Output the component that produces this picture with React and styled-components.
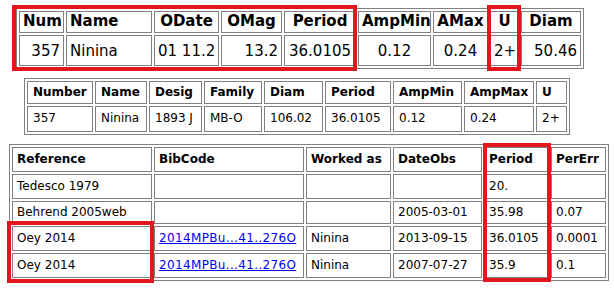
import React from "react"
import styled, { createGlobalStyle } from "styled-components"

const GlobalStyle = createGlobalStyle`
  * { box-sizing: border-box; }
  body {
    margin: 0;
    background: #fff;
    font-family: "DejaVu Sans", Verdana, sans-serif;
    color: #000;
  }
`

const summary = {
  width: 568,
  font: 15,
  pad: 3,
  heights: [22, 31],
  cols: [
    { label: "Num", w: 45, head: "center", body: "right" },
    { label: "Name", w: 86, head: "left", body: "left" },
    { label: "ODate", w: 65, head: "center", body: "left" },
    { label: "OMag", w: 61, head: "center", body: "right" },
    { label: "Period", w: 72, head: "center", body: "center" },
    { label: "AmpMin", w: 73, head: "center", body: "center" },
    { label: "AMax", w: 55, head: "center", body: "center" },
    { label: "U", w: 29, head: "center", body: "left" },
    { label: "Diam", w: 60, head: "center", body: "right" },
  ],
  rows: [["357", "Ninina", "01 11.2", "13.2", "36.0105", "0.12", "0.24", "2+", "50.46"]],
}

const details = {
  width: 546,
  font: 12,
  pad: 5,
  heights: [23, 26],
  cols: [
    { label: "Number", w: 66 },
    { label: "Name", w: 52 },
    { label: "Desig", w: 53 },
    { label: "Family", w: 58 },
    { label: "Diam", w: 59 },
    { label: "Period", w: 66 },
    { label: "AmpMin", w: 69 },
    { label: "AmpMax", w: 70 },
    { label: "U", w: 31 },
  ],
  rows: [["357", "Ninina", "1893 J", "MB-O", "106.02", "36.0105", "0.12", "0.24", "2+"]],
}

const bib = { href: "#", text: "2014MPBu...41..276O" }

const periods = {
  width: 600,
  font: 12,
  pad: 4,
  heights: [25, 25, 23, 25, 25],
  cols: [
    { label: "Reference", w: 140 },
    { label: "BibCode", w: 150 },
    { label: "Worked as", w: 85 },
    { label: "DateObs", w: 89 },
    { label: "Period", w: 65 },
    { label: "PerErr", w: 55 },
  ],
  rows: [
    ["Tedesco 1979", "", "", "", "20.", ""],
    ["Behrend 2005web", "", "", "2005-03-01", "35.98", "0.07"],
    ["Oey 2014", bib, "Ninina", "2013-09-15", "36.0105", "0.0001"],
    ["Oey 2014", bib, "Ninina", "2007-07-27", "35.9", "0.1"],
  ],
}

// red annotation frames drawn over the tables
const marks = [
  { x: 12, y: 5, w: 345, h: 66 },
  { x: 487, y: 5, w: 34, h: 66 },
  { x: 483, y: 143, w: 68, h: 139 },
  { x: 7, y: 221, w: 147, h: 62 },
]

const Page = styled.div`
  position: relative;
  width: 614px;
  height: 291px;
  display: flex;
  flex-direction: column;
  align-items: flex-start;
  padding-top: 8px;
  gap: 9px;
  overflow: hidden;
`

const Grid = styled.table`
  border-collapse: separate;
  border-spacing: 2px;
  border: 1px solid #808080;
  table-layout: fixed;
  width: ${(p) => p.$width}px;
  margin-left: ${(p) => p.$x}px;
  font-size: ${(p) => p.$font}px;
  line-height: 1.15;
`

const Head = styled.th`
  border: 1px solid #808080;
  padding: 0 ${(p) => p.$pad}px;
  width: ${(p) => p.$w}px;
  height: ${(p) => p.$h}px;
  text-align: ${(p) => p.$align || "left"};
  font-weight: bold;
  white-space: nowrap;
  overflow: hidden;
`

const Cell = styled.td`
  border: 1px solid #808080;
  padding: ${(p) => (p.$h > 28 ? "3px" : "0")} ${(p) => p.$pad}px 0;
  height: ${(p) => p.$h}px;
  text-align: ${(p) => p.$align || "left"};
  white-space: nowrap;
  overflow: hidden;
`

const BibLink = styled.a`
  color: #0000ee;
  text-decoration: underline;
  letter-spacing: 0.35px;
`

const Marker = styled.div`
  position: absolute;
  left: ${(p) => p.$x}px;
  top: ${(p) => p.$y}px;
  width: ${(p) => p.$w}px;
  height: ${(p) => p.$h}px;
  border: 4px solid #e3151f;
  pointer-events: none;
`

const DataTable = ({ spec, x }) => (
  <Grid $width={spec.width} $x={x} $font={spec.font}>
    <thead>
      <tr>
        {spec.cols.map((c) => (
          <Head key={c.label} $w={c.w} $h={spec.heights[0]} $pad={spec.pad} $align={c.head}>
            {c.label}
          </Head>
        ))}
      </tr>
    </thead>
    <tbody>
      {spec.rows.map((row, i) => (
        <tr key={i}>
          {row.map((v, j) => (
            <Cell key={j} $h={spec.heights[i + 1]} $pad={spec.pad} $align={spec.cols[j].body}>
              {typeof v === "object" ? <BibLink href={v.href}>{v.text}</BibLink> : v}
            </Cell>
          ))}
        </tr>
      ))}
    </tbody>
  </Grid>
)

export default function App() {
  return (
    <>
      <GlobalStyle />
      <Page>
        <DataTable spec={summary} x={16} />
        <DataTable spec={details} x={24} />
        <DataTable spec={periods} x={9} />
        {marks.map((m, i) => (
          <Marker key={i} $x={m.x} $y={m.y} $w={m.w} $h={m.h} />
        ))}
      </Page>
    </>
  )
}
